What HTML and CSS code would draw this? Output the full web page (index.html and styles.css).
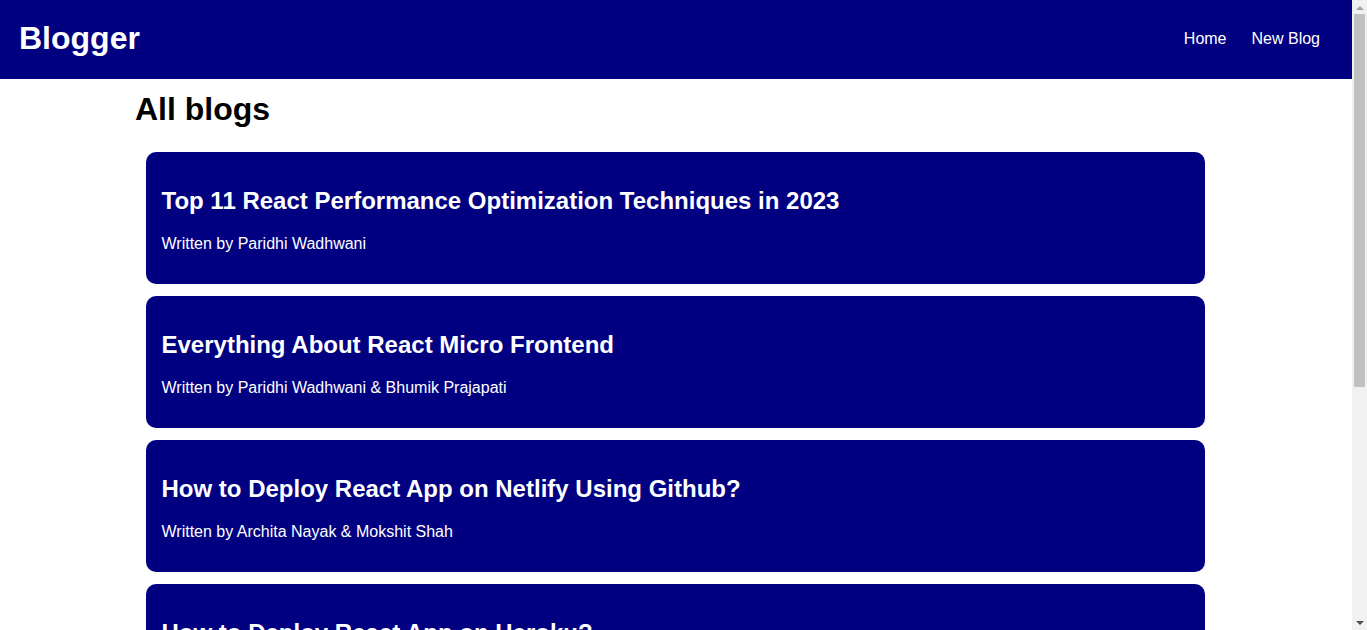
FILE: index.html
```html
<!DOCTYPE html>
<html lang="en">
<head>
<meta charset="utf-8">
<title>Blogger</title>
<link rel="stylesheet" href="styles.css">
</head>
<body>
<div class="page">
  <nav class="navbar">
    <h1 class="brand">Blogger</h1>
    <div class="links">
      <a href="#">Home</a>
      <a href="#">New Blog</a>
    </div>
  </nav>
  <main class="content">
    <h2 class="page-title">All blogs</h2>
    <div class="blog-list">
      <div class="blog-preview">
        <h2>Top 11 React Performance Optimization Techniques in 2023</h2>
        <p>Written by Paridhi Wadhwani</p>
      </div>
      <div class="blog-preview">
        <h2>Everything About React Micro Frontend</h2>
        <p>Written by Paridhi Wadhwani &amp; Bhumik Prajapati</p>
      </div>
      <div class="blog-preview">
        <h2>How to Deploy React App on Netlify Using Github?</h2>
        <p>Written by Archita Nayak &amp; Mokshit Shah</p>
      </div>
      <div class="blog-preview">
        <h2>How to Deploy React App on Heroku?</h2>
        <p>Written by Archita Nayak</p>
      </div>
      <div class="blog-preview">
        <h2>React Best Practices</h2>
        <p>Written by Paridhi Wadhwani</p>
      </div>
    </div>
  </main>
</div>
<aside class="scrollbar" aria-hidden="true">
  <div class="sb-button"><span class="arrow-up"></span></div>
  <div class="sb-track">
    <div class="sb-thumb"></div>
  </div>
  <div class="sb-button"><span class="arrow-down"></span></div>
</aside>
</body>
</html>
```
FILE: styles.css
```css
html, body {
  margin: 0;
  padding: 0;
}
body {
  font-family: "Liberation Sans", Arial, sans-serif;
  color: #000;
  background: #fff;
  display: flex;
  align-items: flex-start;
}
.page {
  flex: 1;
  min-width: 0;
}
.scrollbar {
  flex: none;
  width: 15px;
  height: 100vh;
  position: sticky;
  top: 0;
  background: #f1f1f1;
  display: flex;
  flex-direction: column;
}
.sb-button {
  height: 15px;
  flex: none;
  display: flex;
  align-items: center;
  justify-content: center;
}
.arrow-up {
  width: 0;
  height: 0;
  border-left: 4px solid transparent;
  border-right: 4px solid transparent;
  border-bottom: 4px solid #a3a3a3;
}
.arrow-down {
  width: 0;
  height: 0;
  border-left: 4px solid transparent;
  border-right: 4px solid transparent;
  border-top: 4px solid #505050;
}
.sb-track {
  flex: 1;
  padding: 0 2px;
}
.sb-thumb {
  height: 373px;
  margin-top: -1px;
  background: #c1c1c1;
}
.navbar {
  height: 79px;
  background: #000080;
  display: flex;
  align-items: center;
  justify-content: space-between;
  padding: 0 32px 2px 19px;
  box-sizing: border-box;
}
.brand {
  margin: 0;
  color: #fff;
  font-size: 32px;
  line-height: 37px;
  font-weight: bold;
}
.links {
  display: flex;
  gap: 25px;
}
.links a {
  color: #fff;
  text-decoration: none;
  font-size: 16px;
  line-height: 18px;
}
.content {
  max-width: 1082px;
  margin: 0 auto;
}
.page-title {
  margin: 0;
  padding-top: 12px;
  font-size: 32px;
  line-height: 37px;
  font-weight: bold;
}
.blog-list {
  margin-top: 24px;
  display: flex;
  flex-direction: column;
  gap: 12px;
  padding: 0 12px 0 11px;
}
.blog-preview {
  background: #000080;
  color: #fff;
  border-radius: 10px;
  padding: 16px 16px 16px 15.5px;
}
.blog-preview h2 {
  margin: 19px 0 0;
  font-size: 24px;
  line-height: 28px;
  font-weight: bold;
}
.blog-preview p {
  margin: 19.5px 0 15.5px;
  font-size: 16px;
  line-height: 18px;
}
```
